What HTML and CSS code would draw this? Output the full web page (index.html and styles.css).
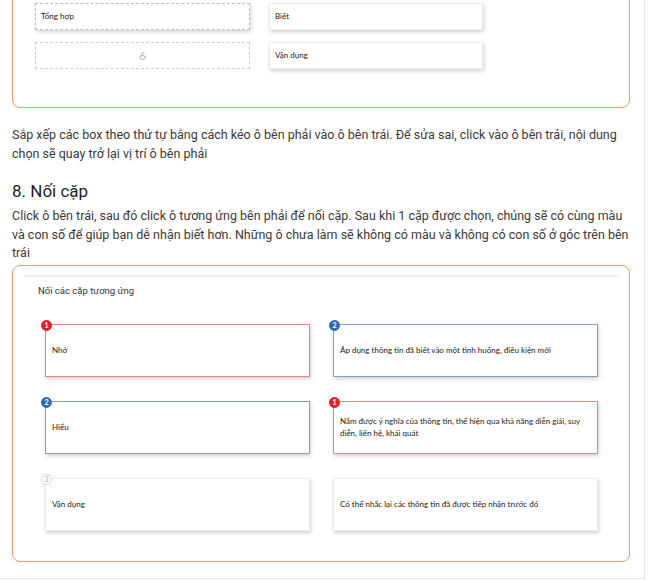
FILE: index.html
```html
<!DOCTYPE html>
<html lang="vi">
<head>
  <meta charset="UTF-8" />
  <meta name="viewport" content="width=device-width, initial-scale=1.0"/>
  <title>Hướng dẫn làm bài</title>
  <link rel="stylesheet" href="styles.css">
</head>
<body>
  <div class="page">
    <div class="card sort-card">
      <div class="sort-grid">
        <div class="box dashed">Tổng hợp</div>
        <div class="box">Biết</div>
        <div class="box dashed empty">6</div>
        <div class="box">Vận dụng</div>
      </div>
    </div>

    <p class="note first">Sắp xếp các box theo thứ tự bằng cách kéo ô bên phải vào ô bên trái. Để sửa sai, click vào ô bên trái, nội dung chọn sẽ quay trở lại vị trí ô bên phải</p>

    <h2 class="section-title">8. Nối cặp</h2>
    <p class="note">Click ô bên trái, sau đó click ô tương ứng bên phải để nối cặp. Sau khi 1 cặp được chọn, chúng sẽ có cùng màu và con số để giúp bạn dễ nhận biết hơn. Những ô chưa làm sẽ không có màu và không có con số ở góc trên bên trái</p>

    <div class="card match-card">
      <div class="match-inner">
        <div class="match-title">Nối các cặp tương ứng</div>
        <div class="match-grid">
          <div class="pair red"><span class="badge">1</span>Nhớ</div>
          <div class="pair blue"><span class="badge">2</span>Áp dụng thông tin đã biết vào một tình huống, điều kiện mới</div>
          <div class="pair blue"><span class="badge">2</span>Hiểu</div>
          <div class="pair red"><span class="badge">1</span>Nắm được ý nghĩa của thông tin, thể hiện qua khả năng diễn giải, suy diễn, liên hệ, khái quát</div>
          <div class="pair"><span class="badge">3</span>Vận dụng</div>
          <div class="pair">Có thể nhắc lại các thông tin đã được tiếp nhận trước đó</div>
        </div>
      </div>
    </div>
  </div>
</body>
</html>
```

FILE: styles.css
```css
* {
  margin: 0;
  padding: 0;
  box-sizing: border-box;
}

body {
  background: #fff;
  font-family: 'Roboto', 'Liberation Sans', sans-serif;
  color: #3c3c3c;
}

.page {
  width: 645px;
  height: 579px;
  padding: 0 14px 0 12px;
  border-right: 1px solid #e4e4e4;
  border-bottom: 1px solid #e4e4e4;
  overflow: hidden;
}

.card {
  border: 1.5px solid #f3976c;
  border-radius: 8px;
  background: #fff;
}

.sort-card {
  margin-top: -40px;
  padding: 42px 22px 38px;
}

.sort-grid {
  display: grid;
  grid-template-columns: 215px 214px;
  column-gap: 19px;
  row-gap: 12px;
}

.box {
  height: 27px;
  display: flex;
  align-items: center;
  padding: 0 0 1px 5px;
  font-family: 'Lato', 'DejaVu Sans', sans-serif;
  font-size: 8px;
  color: #222;
  border: 1px solid #ececec;
  box-shadow: 1px 2px 4px rgba(0, 0, 0, 0.18);
}

.box.dashed {
  border: 1px dashed #bdbdbd;
}

.box.empty {
  border-color: #cfcfcf;
  box-shadow: none;
  justify-content: center;
  padding-left: 0;
  font-size: 12px;
  color: #b5b5b5;
}

.note {
  font-size: 12.5px;
  line-height: 18.5px;
  color: #3a3a3a;
}

.note.first {
  margin-top: 18px;
}

.section-title {
  margin-top: 16px;
  margin-bottom: 4px;
  font-size: 17px;
  line-height: 24px;
  font-weight: 400;
  color: #1e1e1e;
}

.match-card {
  margin-top: 2px;
  padding: 9px 11px 10px;
}

.match-inner {
  border-top: 2px solid #f1f1f1;
  padding: 8px 0 20px;
}

.match-title {
  padding-left: 14px;
  font-size: 9.5px;
  line-height: 12px;
  color: #333;
}

.match-grid {
  display: grid;
  grid-template-columns: 265px 265px;
  column-gap: 23px;
  row-gap: 24px;
  margin: 27px 0 0 21px;
}

.pair {
  position: relative;
  height: 53px;
  display: flex;
  align-items: center;
  padding: 0 10px 0 6px;
  font-family: 'Lato', 'DejaVu Sans', sans-serif;
  font-size: 8px;
  line-height: 12px;
  color: #222;
  background: #fff;
  border: 1px solid #ececec;
  box-shadow: 1px 2px 4px rgba(0, 0, 0, 0.18);
}

.pair.red {
  border-color: #e3868c;
}

.pair.blue {
  border-color: #859fc6;
}

.badge {
  position: absolute;
  left: -5px;
  top: -5px;
  width: 11px;
  height: 11px;
  border-radius: 50%;
  border: 1px solid #d6d6d6;
  background: #fff;
  color: #c4c4c4;
  font-size: 7px;
  line-height: 9px;
  font-weight: 700;
  text-align: center;
}

.pair.red .badge {
  background: #e3202a;
  border-color: #e3202a;
  color: #fff;
}

.pair.blue .badge {
  background: #2b6cb5;
  border-color: #2b6cb5;
  color: #fff;
}
```
